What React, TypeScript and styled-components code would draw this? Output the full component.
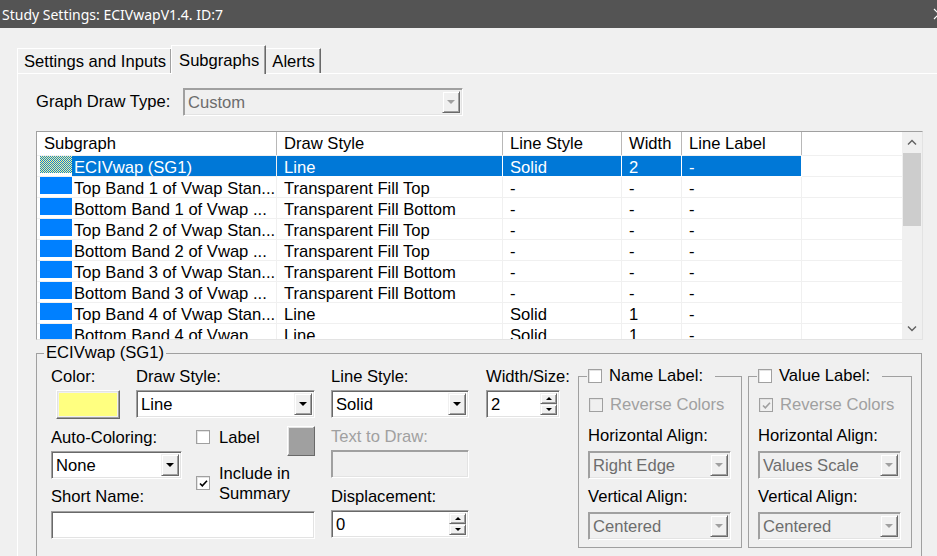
import React from 'react'
import styled, { createGlobalStyle } from 'styled-components'

const GlobalStyle = createGlobalStyle`
    html, body {
        margin  : 0;
        padding : 0;
    }
    body {
        font-family : "Liberation Sans", Arial, sans-serif;
        font-size   : 16.6px;
        color       : #000;
        background  : #f0f0f0;
    }
    * {
        box-sizing : border-box;
    }
`

type SubgraphRow = {
    name: string
    draw: string
    line: string
    width: string
    label: string
    selected?: boolean
}

const rows: SubgraphRow[] = [
    { name: 'ECIVwap (SG1)', draw: 'Line', line: 'Solid', width: '2', label: '-', selected: true },
    { name: 'Top Band 1 of Vwap Stan...', draw: 'Transparent Fill Top', line: '-', width: '-', label: '-' },
    { name: 'Bottom Band 1 of Vwap ...', draw: 'Transparent Fill Bottom', line: '-', width: '-', label: '-' },
    { name: 'Top Band 2 of Vwap Stan...', draw: 'Transparent Fill Top', line: '-', width: '-', label: '-' },
    { name: 'Bottom Band 2 of Vwap ...', draw: 'Transparent Fill Top', line: '-', width: '-', label: '-' },
    { name: 'Top Band 3 of Vwap Stan...', draw: 'Transparent Fill Bottom', line: '-', width: '-', label: '-' },
    { name: 'Bottom Band 3 of Vwap ...', draw: 'Transparent Fill Bottom', line: '-', width: '-', label: '-' },
    { name: 'Top Band 4 of Vwap Stan...', draw: 'Line', line: 'Solid', width: '1', label: '-' },
    { name: 'Bottom Band 4 of Vwap ...', draw: 'Line', line: 'Solid', width: '1', label: '-' },
]

const columns = ['Subgraph', 'Draw Style', 'Line Style', 'Width', 'Line Label']
const COLS = '240px 226px 119px 60px 120px 1fr'

const Combo = ({ value, width, disabled }: { value: string; width: number; disabled?: boolean }) => (
    <ComboBox $w={width} $disabled={disabled}>
        <ComboValue $disabled={disabled}>{value}</ComboValue>
        <ComboButton>
            <DownTriangle $disabled={disabled} />
        </ComboButton>
    </ComboBox>
)

const Spinner = ({ value, width }: { value: string; width: number }) => (
    <SpinBox $w={width}>
        <ComboValue>{value}</ComboValue>
        <SpinButtons>
            <SpinButton><UpTriangle /></SpinButton>
            <SpinButton><SmallDown /></SpinButton>
        </SpinButtons>
    </SpinBox>
)

const Check = ({ checked, disabled }: { checked?: boolean; disabled?: boolean }) => (
    <CheckBox $disabled={disabled}>
        {checked && (
            <svg width="11" height="11" viewBox="0 0 11 11">
                <path d="M2 5.5 L4.3 7.8 L9 2.8" fill="none" stroke={disabled ? '#a0a0a0' : '#000'} strokeWidth="1.6" />
            </svg>
        )}
    </CheckBox>
)

const LabelGroup = ({ title, checkedReverse, horizontal }: { title: string; checkedReverse?: boolean; horizontal: string }) => (
    <SubGroup>
        <SubLegend>
            <Check />
            <span>{title}</span>
        </SubLegend>
        <CheckRow $disabled>
            <Check checked={checkedReverse} disabled />
            <span>Reverse Colors</span>
        </CheckRow>
        <SubField $mt={12}>
            <FieldLabel>Horizontal Align:</FieldLabel>
            <Combo value={horizontal} width={143} disabled />
        </SubField>
        <SubField $mt={8}>
            <FieldLabel>Vertical Align:</FieldLabel>
            <Combo value="Centered" width={143} disabled />
        </SubField>
    </SubGroup>
)

const App = () => {
    return (
        <>
            <GlobalStyle />
            <Window>
                <TitleBar>
                    <span>Study Settings: ECIVwapV1.4. ID:7</span>
                    <svg width="12" height="12" viewBox="0 0 12 12" style={{ marginRight: -8 }}>
                        <path d="M1 1 L11 11 M11 1 L1 11" stroke="#fff" strokeWidth="1.2" />
                    </svg>
                </TitleBar>
                <Body>
                    <TabStrip>
                        <Tab>Settings and Inputs</Tab>
                        <Tab $active>Subgraphs</Tab>
                        <Tab>Alerts</Tab>
                    </TabStrip>
                    <TabPanel>
                        <DrawTypeRow>
                            <span>Graph Draw Type:</span>
                            <Combo value="Custom" width={280} disabled />
                        </DrawTypeRow>

                        <ListBox>
                            <ListMain>
                                <HeaderRow>
                                    {columns.map((c) => (
                                        <HeaderCell key={c}>{c}</HeaderCell>
                                    ))}
                                    <HeaderCell />
                                </HeaderRow>
                                {rows.map((r, i) => (
                                    <Row key={i}>
                                        <NameCell>
                                            <Swatch $checker={r.selected} />
                                            <NameText $selected={r.selected}>{r.name}</NameText>
                                        </NameCell>
                                        <Cell $selected={r.selected}>{r.draw}</Cell>
                                        <Cell $selected={r.selected}>{r.line}</Cell>
                                        <Cell $selected={r.selected}>{r.width}</Cell>
                                        <Cell $selected={r.selected}>{r.label}</Cell>
                                        <Cell $last />
                                    </Row>
                                ))}
                            </ListMain>
                            <ScrollBar>
                                <ScrollArrow>
                                    <svg width="10" height="6" viewBox="0 0 10 6">
                                        <path d="M1 5.5 L5 1.5 L9 5.5" fill="none" stroke="#606060" strokeWidth="1.4" />
                                    </svg>
                                </ScrollArrow>
                                <ScrollThumb />
                                <ScrollTrack />
                                <ScrollArrow>
                                    <svg width="10" height="6" viewBox="0 0 10 6">
                                        <path d="M1 0.5 L5 4.5 L9 0.5" fill="none" stroke="#606060" strokeWidth="1.4" />
                                    </svg>
                                </ScrollArrow>
                            </ScrollBar>
                        </ListBox>

                        <GroupBox>
                            <GroupLegend>ECIVwap (SG1)</GroupLegend>
                            <Columns>
                                <Column $w={264}>
                                    <TopRow>
                                        <Field $w={85}>
                                            <FieldLabel>Color:</FieldLabel>
                                            <SwatchButton $w={64} $h={29} $ml={5} $inner={4}>
                                                <SwatchFill $color="#ffff80" />
                                            </SwatchButton>
                                        </Field>
                                        <Field>
                                            <FieldLabel>Draw Style:</FieldLabel>
                                            <Combo value="Line" width={179} />
                                        </Field>
                                    </TopRow>
                                    <LeftBlock>
                                        <Field style={{ gridArea: 'auto' }}>
                                            <FieldLabel>Auto-Coloring:</FieldLabel>
                                            <Combo value="None" width={131} />
                                        </Field>
                                        <Options>
                                            <LabelRow>
                                                <Check />
                                                <OptionText>Label</OptionText>
                                                <SwatchButton $w={28} $h={30} $ml={0} $inner={3} style={{ marginLeft: 'auto' }}>
                                                    <SwatchFill $color="#a0a0a0" />
                                                </SwatchButton>
                                            </LabelRow>
                                            <IncludeRow>
                                                <Check checked />
                                                <OptionText>Include in<br />Summary</OptionText>
                                            </IncludeRow>
                                        </Options>
                                        <ShortLabel>Short Name:</ShortLabel>
                                        <ShortInput />
                                    </LeftBlock>
                                </Column>

                                <Column $w={138} $ml={16}>
                                    <Field>
                                        <FieldLabel>Line Style:</FieldLabel>
                                        <Combo value="Solid" width={138} />
                                    </Field>
                                    <Field $mt={9}>
                                        <FieldLabel $disabled>Text to Draw:</FieldLabel>
                                        <TextBox $w={138} $disabled />
                                    </Field>
                                    <Field $mt={9}>
                                        <FieldLabel>Displacement:</FieldLabel>
                                        <Spinner value="0" width={138} />
                                    </Field>
                                </Column>

                                <Column $w={85} $ml={17}>
                                    <Field>
                                        <FieldLabel>Width/Size:</FieldLabel>
                                        <Spinner value="2" width={74} />
                                    </Field>
                                </Column>

                                <Column $w={164} $ml={7}>
                                    <LabelGroup title="Name Label:" horizontal="Right Edge" />
                                </Column>

                                <Column $w={164} $ml={6}>
                                    <LabelGroup title="Value Label:" horizontal="Values Scale" checkedReverse />
                                </Column>
                            </Columns>
                        </GroupBox>
                    </TabPanel>
                </Body>
            </Window>
        </>
    )
}

export default App

const Window = styled.div`
    width          : 937px;
    height         : 556px;
    overflow       : hidden;
    display        : flex;
    flex-direction : column;
    background     : #f0f0f0;
`

const TitleBar = styled.div`
    height          : 28px;
    flex-shrink     : 0;
    display         : flex;
    align-items     : center;
    justify-content : space-between;
    padding-left    : 2px;
    background      : #545454;
    color           : #fff;
    font-family     : "Noto Sans", "Open Sans", sans-serif;
    font-size       : 14px;
`

const Body = styled.div`
    flex           : 1;
    display        : flex;
    flex-direction : column;
    padding        : 17px 0 0 17px;
    min-height     : 0;
`

const TabStrip = styled.div`
    position      : relative;
    z-index       : 1;
    display       : flex;
    align-items   : flex-end;
    height        : 29px;
    margin-bottom : -1px;
`

const Tab = styled.div<{ $active?: boolean }>`
    position      : relative;
    z-index       : ${p => (p.$active ? 1 : 0)};
    height        : ${p => (p.$active ? 29 : 25)}px;
    margin        : 0 ${p => (p.$active ? -1 : 0)}px ${p => (p.$active ? 0 : 1)}px;
    padding       : 1px ${p => (p.$active ? 6 : 5)}px 0 ${p => (p.$active ? 7 : 6)}px;
    display       : flex;
    align-items   : center;
    background    : #f0f0f0;
    border-top    : 1px solid #fff;
    border-left   : 1px solid #fff;
    border-right  : 1px solid #696969;
    box-shadow    : inset -1px 0 0 #a0a0a0;
    white-space   : nowrap;
`

const TabPanel = styled.div`
    flex        : 1;
    width       : calc(100% + 20px);
    border-top  : 1px solid #fff;
    border-left : 1px solid #fff;
    padding     : 14px 0 0 18px;
`

const DrawTypeRow = styled.div`
    display               : grid;
    grid-template-columns : 147px 280px;
    align-items           : center;
    height                : 28px;
`

const ComboBox = styled.div<{ $w: number; $disabled?: boolean }>`
    width        : ${p => p.$w}px;
    height       : 28px;
    display      : flex;
    padding      : 2px;
    border       : 1px solid;
    border-color : #a0a0a0 #fff #fff #a0a0a0;
    box-shadow   : inset 1px 1px 0 ${p => (p.$disabled ? '#a0a0a0' : '#696969')}, inset -1px -1px 0 #e3e3e3;
    background   : ${p => (p.$disabled ? '#f0f0f0' : '#fff')};
`

const ComboValue = styled.div<{ $disabled?: boolean }>`
    flex        : 1;
    padding     : 2px 0 0 2px;
    line-height : 20px;
    color       : ${p => (p.$disabled ? '#6d6d6d' : '#000')};
    white-space : nowrap;
`

const ComboButton = styled.div`
    width           : 18px;
    display         : flex;
    align-items     : center;
    justify-content : center;
    background      : #f0f0f0;
    border          : 1px solid;
    border-color    : #f0f0f0 #696969 #696969 #f0f0f0;
    box-shadow      : inset 1px 1px 0 #fff, inset -1px -1px 0 #a0a0a0;
`

const DownTriangle = styled.div<{ $disabled?: boolean }>`
    width        : 0;
    height       : 0;
    border-left  : 4px solid transparent;
    border-right : 4px solid transparent;
    border-top   : 4px solid ${p => (p.$disabled ? '#a0a0a0' : '#000')};
`

const SpinBox = styled(ComboBox)`
    background : #fff;
`

const SpinButtons = styled.div`
    width          : 17px;
    display        : flex;
    flex-direction : column;
`

const SpinButton = styled(ComboButton)`
    width : 17px;
    flex  : 1;
`

const UpTriangle = styled.div`
    width         : 0;
    height        : 0;
    border-left   : 3px solid transparent;
    border-right  : 3px solid transparent;
    border-bottom : 3px solid #000;
`

const SmallDown = styled.div`
    width        : 0;
    height       : 0;
    border-left  : 3px solid transparent;
    border-right : 3px solid transparent;
    border-top   : 3px solid #000;
`

const ListBox = styled.div`
    margin-top   : 15px;
    width        : 887px;
    height       : 209px;
    display      : flex;
    border       : 1px solid;
    border-color : #a0a0a0 #e3e3e3 #e3e3e3 #a0a0a0;
    background   : #fff;
    overflow     : hidden;
`

const ListMain = styled.div`
    flex     : 1;
    overflow : hidden;
`

const HeaderRow = styled.div`
    display               : grid;
    grid-template-columns : ${COLS};
    height                : 24px;
    background            : #fff;
    border-bottom         : 1px solid #f0f0f0;
`

const HeaderCell = styled.div`
    padding      : 1px 0 0 7px;
    line-height  : 22px;
    border-right : 1px solid #b8b8b8;
    white-space  : nowrap;

    &:last-child {
        border-right : none;
    }
`

const Row = styled.div`
    display               : grid;
    grid-template-columns : ${COLS};
    height                : 21px;
`

const NameCell = styled.div`
    display       : flex;
    border-right  : 1px solid #f0f0f0;
    border-bottom : 1px solid #f0f0f0;
    padding-left  : 3px;
    overflow      : hidden;
`

const Swatch = styled.div<{ $checker?: boolean }>`
    width      : 32px;
    height     : 17px;
    flex-shrink: 0;
    background : ${p => (p.$checker
        ? 'repeating-conic-gradient(#ffff80 0 25%, #0a78e6 0 50%) 0 0 / 2px 2px'
        : '#0080ff')};
`

const NameText = styled.div<{ $selected?: boolean }>`
    flex         : 1;
    padding      : 2px 0 0 2px;
    line-height  : 19px;
    white-space  : nowrap;
    background   : ${p => (p.$selected ? '#0078d7' : 'transparent')};
    color        : ${p => (p.$selected ? '#fff' : '#000')};
`

const Cell = styled.div<{ $selected?: boolean; $last?: boolean }>`
    padding       : 2px 0 0 7px;
    line-height   : 19px;
    white-space   : nowrap;
    overflow      : hidden;
    border-right  : ${p => (p.$last ? 'none' : `1px solid ${p.$selected ? '#fff' : '#f0f0f0'}`)};
    border-bottom : 1px solid ${p => (p.$selected ? '#fff' : '#f0f0f0')};
    background    : ${p => (p.$selected ? '#0078d7' : 'transparent')};
    color         : ${p => (p.$selected ? '#fff' : '#000')};
`

const ScrollBar = styled.div`
    width          : 20px;
    flex-shrink    : 0;
    display        : flex;
    flex-direction : column;
    background     : #f0f0f0;
`

const ScrollArrow = styled.div`
    height          : 20px;
    display         : flex;
    align-items     : center;
    justify-content : center;
`

const ScrollThumb = styled.div`
    height     : 73px;
    margin     : 1px 1px 0;
    background : #cdcdcd;
`

const ScrollTrack = styled.div`
    flex : 1;
`

const GroupBox = styled.fieldset`
    margin     : 4px 0 0;
    width      : 886px;
    height     : 230px;
    padding    : 5px 0 0 14px;
    border     : 1px solid #a0a0a0;
    min-width  : 0;
`

const GroupLegend = styled.legend`
    margin-left : -7px;
    padding     : 0 2px;
    line-height : 18px;
`

const Columns = styled.div`
    display     : flex;
    align-items : flex-start;
`

const Column = styled.div<{ $w: number; $ml?: number }>`
    width          : ${p => p.$w}px;
    margin-left    : ${p => p.$ml || 0}px;
    flex-shrink    : 0;
    display        : flex;
    flex-direction : column;
`

const TopRow = styled.div`
    display : flex;
`

const Field = styled.div<{ $w?: number; $mt?: number }>`
    display        : flex;
    flex-direction : column;
    align-items    : flex-start;
    gap            : 5px;
    width          : ${p => (p.$w ? `${p.$w}px` : 'auto')};
    margin-top     : ${p => p.$mt || 0}px;
`

const FieldLabel = styled.div<{ $disabled?: boolean }>`
    line-height : 18px;
    padding-top : 1px;
    margin-bottom: -1px;
    white-space : nowrap;
    color       : ${p => (p.$disabled ? '#a0a0a0' : '#000')};
`

const SwatchButton = styled.div<{ $w: number; $h: number; $ml: number; $inner: number }>`
    width        : ${p => p.$w}px;
    height       : ${p => p.$h}px;
    margin-left  : ${p => p.$ml}px;
    padding      : ${p => p.$inner - 2}px;
    background   : #f0f0f0;
    border       : 1px solid;
    border-color : #fff #696969 #696969 #fff;
    box-shadow   : inset -1px -1px 0 #a0a0a0, inset 1px 1px 0 #e3e3e3;
`

const SwatchFill = styled.div<{ $color: string }>`
    width      : 100%;
    height     : 100%;
    background : ${p => p.$color};
`

const LeftBlock = styled.div`
    margin-top            : 9px;
    display               : grid;
    grid-template-columns : 145px 119px;
    grid-template-areas   : "auto opts" "short opts" "name name";
    grid-template-rows    : 51px 27px auto;
`

const Options = styled.div`
    grid-area      : opts;
    margin-top     : -2px;
    display        : flex;
    flex-direction : column;
`

const LabelRow = styled.div`
    display     : flex;
    align-items : flex-start;
    height      : 30px;

    & > div:first-child {
        margin-top : 4px;
    }
`

const IncludeRow = styled.div`
    display     : flex;
    align-items : center;
    margin-top  : 6px;
`

const OptionText = styled.div`
    margin-left : 9px;
    line-height : 20px;
    margin-top  : 2px;
`

const ShortLabel = styled.div`
    grid-area   : short;
    align-self  : end;
    line-height : 18px;
`

const ShortInput = styled.div`
    grid-area    : name;
    margin-top   : 5px;
    width        : 264px;
    height       : 28px;
    border       : 1px solid;
    border-color : #a0a0a0 #fff #fff #a0a0a0;
    box-shadow   : inset 1px 1px 0 #696969, inset -1px -1px 0 #e3e3e3;
    background   : #fff;
`

const TextBox = styled.div<{ $w: number; $disabled?: boolean }>`
    width        : ${p => p.$w}px;
    height       : 28px;
    border       : 1px solid;
    border-color : #a0a0a0 #fff #fff #a0a0a0;
    box-shadow   : inset 1px 1px 0 ${p => (p.$disabled ? '#a0a0a0' : '#696969')}, inset -1px -1px 0 #e3e3e3;
    background   : ${p => (p.$disabled ? '#f0f0f0' : '#fff')};
`

const CheckBox = styled.div<{ $disabled?: boolean }>`
    width           : 14px;
    height          : 14px;
    flex-shrink     : 0;
    display         : flex;
    align-items     : center;
    justify-content : center;
    border          : 1px solid #a0a0a0;
    box-shadow      : inset 1px 1px 0 #e3e3e3;
    background      : ${p => (p.$disabled ? '#f0f0f0' : '#fff')};
`

const SubGroup = styled.fieldset`
    margin    : 0;
    width     : 164px;
    height    : 181px;
    padding   : 0 0 0 9px;
    border    : 1px solid #a0a0a0;
    min-width : 0;
`

const SubLegend = styled.legend`
    display      : flex;
    align-items  : center;
    gap          : 7px;
    margin-left  : -1px;
    padding      : 0 12px 0 1px;
    line-height  : 18px;
`

const CheckRow = styled.div<{ $disabled?: boolean }>`
    display     : flex;
    align-items : center;
    gap         : 7px;
    margin-top  : 11px;
    line-height : 18px;
    padding-left: 1px;
    color       : ${p => (p.$disabled ? '#a0a0a0' : '#000')};
`

const SubField = styled(Field)<{ $mt: number }>`
    gap        : 7px;
    margin-top : ${p => p.$mt}px;
`
